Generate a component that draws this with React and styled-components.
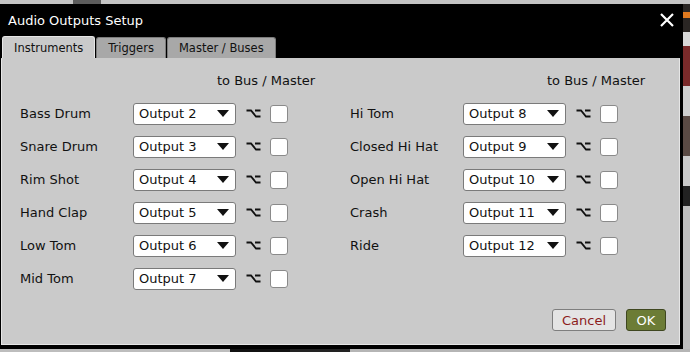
import React from "react";
import styled, { createGlobalStyle } from "styled-components";

const GlobalStyle = createGlobalStyle`
  body {
    margin: 0;
    background: #bdbdbd;
    font-family: "DejaVu Sans", "Liberation Sans", sans-serif;
  }
`;

const left = [
  ["Bass Drum", 2],
  ["Snare Drum", 3],
  ["Rim Shot", 4],
  ["Hand Clap", 5],
  ["Low Tom", 6],
  ["Mid Tom", 7],
];

const right = [
  ["Hi Tom", 8],
  ["Closed Hi Hat", 9],
  ["Open Hi Hat", 10],
  ["Crash", 11],
  ["Ride", 12],
];

const AltIcon = () => (
  <svg width="15" height="9" viewBox="0 0 15 9">
    <path
      d="M0.5 1.5 H5 L10 7.5 H14.5 M9 1.5 H14.5"
      fill="none"
      stroke="#111"
      strokeWidth="1.8"
    />
  </svg>
);

const Caret = () => (
  <svg width="12" height="7" viewBox="0 0 12 7">
    <path d="M0 0 H12 L6 7 Z" fill="#111" />
  </svg>
);

const CloseIcon = () => (
  <svg width="14" height="14" viewBox="0 0 14 14">
    <path d="M1 1 L13 13 M13 1 L1 13" stroke="#fff" strokeWidth="2.2" />
  </svg>
);

const Column = ({ rows }) => (
  <Col>
    <Header>to Bus / Master</Header>
    {rows.map(([name, out]) => (
      <Row key={name}>
        <Label>{name}</Label>
        <Select>
          <span>Output {out}</span>
          <Caret />
        </Select>
        <AltWrap>
          <AltIcon />
        </AltWrap>
        <Check />
      </Row>
    ))}
  </Col>
);

const App = () => {
  return (
    <Page>
      <GlobalStyle />
      <TopStrip>
        <TopPatch />
      </TopStrip>
      <Middle>
        <Dialog>
          <TitleBar>
            <Title>Audio Outputs Setup</Title>
            <CloseIcon />
          </TitleBar>
          <TabBar>
            <Tab $active>Instruments</Tab>
            <Tab>Triggers</Tab>
            <Tab>Master / Buses</Tab>
          </TabBar>
          <Panel>
            <Columns>
              <Column rows={left} />
              <Column rows={right} />
            </Columns>
            <Footer>
              <Button>Cancel</Button>
              <Button $primary>OK</Button>
            </Footer>
          </Panel>
        </Dialog>
        <SideStrip>
          <SideBit $c="#2a2624" $h={8} />
          <SideBit $c="#e07a20" $h={6} />
          <SideBit $c="#2a2624" $h={14} />
          <SideBit $c="#d8d8d8" $h={14} />
          <SideBit $c="#7a2a2a" $h={40} />
          <SideBit $c="#cfcfcf" $h={30} />
          <SideBit $c="#5a4a44" $h={40} />
          <SideBit $c="#c9c9c9" $h={30} />
          <SideBit $c="#222" $h={20} />
          <SideBit $c="#bdbdbd" $h={143} />
        </SideStrip>
      </Middle>
      <BottomStrip>
        <BottomBit $w={230} $c="#bdbdbd" />
        <BottomBit $w={60} $c="#111" />
        <BottomBit $w={60} $c="#222" />
        <BottomBit $w={340} $c="#b5b5b5" />
      </BottomStrip>
    </Page>
  );
};

const Page = styled.div`
  width: 690px;
  height: 352px;
  display: flex;
  flex-direction: column;
  overflow: hidden;
`;

const TopStrip = styled.div`
  height: 4px;
  background: #c4c4c4;
  display: flex;
`;

const TopPatch = styled.div`
  margin-left: 73px;
  width: 28px;
  background: #5c5c5c;
`;

const Middle = styled.div`
  height: 345px;
  display: flex;
`;

const Dialog = styled.div`
  width: 683px;
  background: #000;
  padding: 0 3px 4px 1px;
  box-sizing: border-box;
  display: flex;
  flex-direction: column;
`;

const TitleBar = styled.div`
  height: 32px;
  display: flex;
  align-items: center;
  justify-content: space-between;
  padding: 0 6px 0 7px;
`;

const Title = styled.div`
  color: #fff;
  font-size: 13px;
`;

const TabBar = styled.div`
  height: 22px;
  display: flex;
  align-items: flex-end;
  gap: 1px;
  padding-left: 1px;
`;

const Tab = styled.div`
  height: ${(p) => (p.$active ? "22px" : "21px")};
  box-sizing: border-box;
  padding: 0 11px;
  display: flex;
  align-items: center;
  font-size: 11.5px;
  color: #111;
  border-radius: 3px 3px 0 0;
  background: ${(p) => (p.$active ? "#cacaca" : "#a8a8a8")};
  border: 1px solid ${(p) => (p.$active ? "#e6e6e6" : "#7c7c7c")};
  border-bottom: none;
`;

const Panel = styled.div`
  height: 287px;
  box-sizing: border-box;
  background: #cacaca;
  border: 1px solid #e6e6e6;
  border-top-color: #cacaca;
  display: flex;
  flex-direction: column;
`;

const Columns = styled.div`
  display: grid;
  grid-template-columns: 330px 1fr;
  padding: 5px 0 0 18px;
`;

const Col = styled.div`
  display: flex;
  flex-direction: column;
`;

const Header = styled.div`
  height: 33px;
  display: flex;
  align-items: center;
  padding-left: 197px;
  font-size: 13px;
  color: #111;
`;

const Row = styled.div`
  height: 33px;
  display: flex;
  align-items: center;
`;

const Label = styled.div`
  width: 113px;
  font-size: 13px;
  color: #111;
`;

const Select = styled.div`
  width: 103px;
  height: 22px;
  box-sizing: border-box;
  background: #fff;
  border: 1px solid #7a7a7a;
  border-radius: 3px;
  display: flex;
  align-items: center;
  justify-content: space-between;
  padding: 0 6px 0 5px;
  font-size: 13px;
  color: #111;
`;

const AltWrap = styled.div`
  display: flex;
  margin: 0 9px 0 10px;
`;

const Check = styled.div`
  width: 18px;
  height: 18px;
  box-sizing: border-box;
  background: #fff;
  border: 1px solid #8a8a8a;
  border-radius: 3px;
`;

const Footer = styled.div`
  margin-top: auto;
  display: flex;
  justify-content: flex-end;
  gap: 10px;
  padding: 0 13px 13px 0;
`;

const Button = styled.div`
  height: 22px;
  box-sizing: border-box;
  padding: 0 9px;
  width: ${(p) => (p.$primary ? "40px" : "64px")};
  display: flex;
  align-items: center;
  justify-content: center;
  font-size: 13px;
  border-radius: 3px;
  background: ${(p) => (p.$primary ? "#6c7c36" : "#e4e4e4")};
  color: ${(p) => (p.$primary ? "#fff" : "#8c1c1c")};
  border: 1px solid ${(p) => (p.$primary ? "#3f4720" : "#7e7e7e")};
`;

const SideStrip = styled.div`
  flex: 1;
  display: flex;
  flex-direction: column;
`;

const SideBit = styled.div`
  height: ${(p) => p.$h}px;
  background: ${(p) => p.$c};
`;

const BottomStrip = styled.div`
  flex: 1;
  display: flex;
`;

const BottomBit = styled.div`
  width: ${(p) => p.$w}px;
  background: ${(p) => p.$c};
`;

export default App;
